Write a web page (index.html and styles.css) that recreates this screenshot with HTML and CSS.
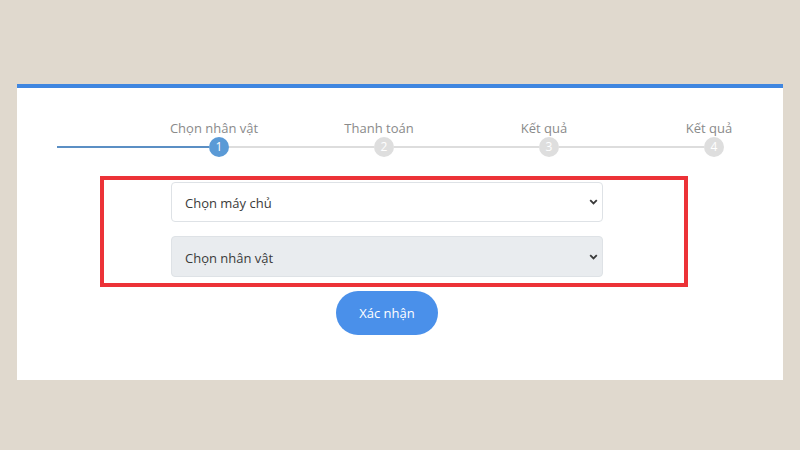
FILE: index.html
```html
<!DOCTYPE html>
<html lang="vi">
<head>
<meta charset="utf-8">
<link rel="stylesheet" href="styles.css">
</head>
<body>
<div class="card">
  <div class="stepper">
    <div class="step first done">
      <div class="line"></div>
      <div class="node"><span class="label">Chọn nhân vật</span><span class="circle">1</span></div>
    </div>
    <div class="step">
      <div class="line"></div>
      <div class="node"><span class="label">Thanh toán</span><span class="circle">2</span></div>
    </div>
    <div class="step">
      <div class="line"></div>
      <div class="node"><span class="label">Kết quả</span><span class="circle">3</span></div>
    </div>
    <div class="step">
      <div class="line"></div>
      <div class="node"><span class="label">Kết quả</span><span class="circle">4</span></div>
    </div>
  </div>
  <div class="form">
    <div class="select"><span class="text">Chọn máy chủ</span><svg class="chev" width="9" height="6" viewBox="0 0 9 6"><path d="M1.2 1.2 L4.5 4.5 L7.8 1.2" fill="none" stroke="#3a3a3a" stroke-width="1.8"/></svg></div>
    <div class="select disabled"><span class="text">Chọn nhân vật</span><svg class="chev" width="9" height="6" viewBox="0 0 9 6"><path d="M1.2 1.2 L4.5 4.5 L7.8 1.2" fill="none" stroke="#3a3a3a" stroke-width="1.8"/></svg></div>
    <button class="btn">Xác nhận</button>
  </div>
  <div class="highlight"></div>
</div>
</body>
</html>
```
FILE: styles.css
```css
html, body {
  margin: 0;
  padding: 0;
  background: #e0d9ce;
  font-family: "Open Sans", "Noto Sans", sans-serif;
}
body {
  padding: 84px 17px 0 17px;
  height: 450px;
  box-sizing: border-box;
}
.card {
  position: relative;
  background: #fff;
  border-top: 4px solid #3f86e0;
  height: 296px;
  box-sizing: border-box;
  padding-top: 31px;
}
.stepper {
  display: grid;
  grid-template-columns: 172px 165px 165px 165px;
  margin-left: 40px;
}
.step {
  display: flex;
  align-items: flex-end;
}
.line {
  flex: 1;
  height: 2px;
  background: #dddddd;
  margin-bottom: 9px;
}
.step.first .line {
  background: #5b8fc4;
}
.node {
  width: 20px;
  display: flex;
  flex-direction: column;
  align-items: center;
}
.label {
  white-space: nowrap;
  font-size: 13px;
  line-height: 18px;
  color: #8a8a8a;
  margin-right: 10px;
}
.circle {
  width: 20px;
  height: 20px;
  border-radius: 50%;
  background: #dedede;
  color: #fff;
  font-size: 12px;
  line-height: 20px;
  text-align: center;
}
.step.done .circle {
  background: #5a9ad6;
}
.form {
  margin-top: 25px;
  margin-left: 154px;
  width: 432px;
  display: flex;
  flex-direction: column;
  align-items: center;
  gap: 14px;
}
.select {
  width: 100%;
  height: 40px;
  box-sizing: border-box;
  border: 1px solid #dee2e6;
  border-radius: 4px;
  background: #fff;
  display: flex;
  align-items: center;
  justify-content: space-between;
  padding: 0 4px 0 13px;
  font-size: 13px;
  color: #3a3a3a;
}
.select .text {
  padding-top: 2px;
}
.select.disabled {
  background: #e9ecef;
  height: 41px;
}
.btn {
  width: 102px;
  height: 44px;
  border: none;
  border-radius: 22px;
  background: #4a90ea;
  color: #fff;
  font-family: inherit;
  font-size: 13px;
}
.highlight {
  position: absolute;
  left: 83px;
  top: 88px;
  width: 588px;
  height: 111px;
  box-sizing: border-box;
  border: 4px solid #ec3237;
}
```
